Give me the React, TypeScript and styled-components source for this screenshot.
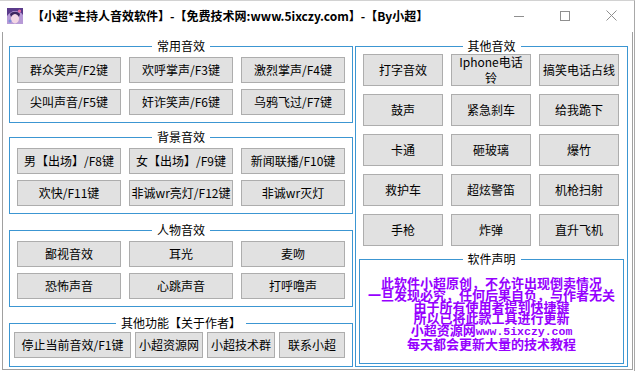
import React from "react";
import styled, { createGlobalStyle } from "styled-components";

const GlobalStyle = createGlobalStyle`
  html, body { margin: 0; padding: 0; background: #fff; }
  body { font-family: "Noto Sans CJK SC", "Microsoft YaHei", sans-serif; }
  * { box-sizing: border-box; }
`;

const Window = styled.div`
  width: 635px;
  height: 371px;
  border-top: 1px solid #d2d2d2;
  border-right: 1px solid #a8a8a8;
  display: flex;
  flex-direction: column;
  background: #fff;
  overflow: hidden;
`;

const TitleBar = styled.div`
  height: 31px;
  flex: none;
  display: flex;
  align-items: center;
  padding-bottom: 2px;
`;

const AppIcon = styled.svg`
  margin-left: 7px;
  flex: none;
`;

const TitleText = styled.div`
  margin-left: 9px;
  font-size: 12px;
  font-weight: 700;
  color: #000;
  white-space: nowrap;
  flex: 1;
`;

const Controls = styled.div`
  display: flex;
  height: 100%;
`;

const ControlButton = styled.div`
  width: 46px;
  display: flex;
  align-items: center;
  justify-content: center;
`;

const Client = styled.div`
  flex: 1;
  margin: 0 1px 1px 2px;
  border: 1px solid #a0a0a0;
  border-top: none;
  display: flex;
  padding: 0 4px 0 6px;
  gap: 2px;
`;

const LeftColumn = styled.div`
  width: 344px;
  display: flex;
  flex-direction: column;
`;

const RightColumn = styled.div`
  width: 273px;
  display: flex;
  flex-direction: column;
`;

const Group = styled.div<{ $mt: number; $pad: string }>`
  position: relative;
  border: 1px solid #3c96d2;
  margin-top: ${(p) => p.$mt}px;
  padding: ${(p) => p.$pad};
`;

const GroupTitle = styled.span`
  position: absolute;
  top: -9px;
  left: 50%;
  transform: translateX(-50%);
  background: #fff;
  padding: 0 5px;
  font-size: 12px;
  line-height: 16px;
  color: #000;
  white-space: nowrap;
`;

const ButtonGrid = styled.div<{ $cols: string; $colGap: number; $rowGap: number; $pad?: string }>`
  display: grid;
  grid-template-columns: ${(p) => p.$cols};
  column-gap: ${(p) => p.$colGap}px;
  row-gap: ${(p) => p.$rowGap}px;
  padding: ${(p) => p.$pad || "0"};
`;

const SoundButton = styled.button<{ $h: number }>`
  height: ${(p) => p.$h}px;
  margin: 0;
  padding: 0 4px;
  background: #e1e1e1;
  border: 1px solid #adadad;
  border-radius: 0;
  font-family: "Noto Sans CJK SC", "Microsoft YaHei", sans-serif;
  font-size: 12px;
  line-height: 16px;
  color: #000;
  display: flex;
  align-items: center;
  justify-content: center;
  text-align: center;
  white-space: nowrap;
`;

const WrapLabel = styled.span`
  white-space: normal;
  display: block;
`;

const Notice = styled.div`
  text-align: center;
  color: #9600ff;
  font-weight: 700;
  font-size: 13px;
  line-height: 11.8px;
  white-space: nowrap;
  font-family: "Noto Sans CJK SC", "SimSun", sans-serif;
`;

const NoticeLine = styled.div``;

const Mono = styled.span`
  font-family: "Liberation Mono", monospace;
  font-size: 11.5px;
`;

const common = ["群众笑声/F2键", "欢呼掌声/F3键", "激烈掌声/F4键", "尖叫声音/F5键", "奸诈笑声/F6键", "乌鸦飞过/F7键"];
const background = ["男【出场】/F8键", "女【出场】/F9键", "新闻联播/F10键", "欢快/F11键", "非诚wr亮灯/F12键", "非诚wr灭灯"];
const people = ["鄙视音效", "耳光", "麦吻", "恐怖声音", "心跳声音", "打呼噜声"];
const other = ["停止当前音效/F1键", "小超资源网", "小超技术群", "联系小超"];
const others2 = ["打字音效", "Iphone电话铃", "搞笑电话占线", "鼓声", "紧急刹车", "给我跪下", "卡通", "砸玻璃", "爆竹", "救护车", "超炫警笛", "机枪扫射", "手枪", "炸弹", "直升飞机"];

export default function App() {
  return (
    <>
      <GlobalStyle />
      <Window>
        <TitleBar>
          <AppIcon width="16" height="16" viewBox="0 0 16 16">
            <rect width="16" height="16" fill="#b79ad6" />
            <path d="M0 0h16v7c-2-3-5-4-8-4S2 5 0 8z" fill="#5a3a8a" />
            <ellipse cx="8" cy="10.5" rx="4" ry="5" fill="#f3d6e4" />
            <path d="M3 6c2-3 8-3 10 0l-1 3c-1-2-3-3-4-3s-3 1-4 3z" fill="#3d2660" />
            <circle cx="12.5" cy="3" r="1.6" fill="#e86aa6" />
            <circle cx="3" cy="13" r="1.5" fill="#7b8fd8" />
          </AppIcon>
          <TitleText>【小超*主持人音效软件】-【免费技术网:www.5ixczy.com】-【By小超】</TitleText>
          <Controls>
            <ControlButton>
              <svg width="10" height="10" viewBox="0 0 10 10">
                <path d="M0 5.5H10" stroke="#8f8f8f" strokeWidth="1" />
              </svg>
            </ControlButton>
            <ControlButton>
              <svg width="10" height="10" viewBox="0 0 10 10">
                <rect x="0.5" y="0.5" width="9" height="9" fill="none" stroke="#8f8f8f" strokeWidth="1" />
              </svg>
            </ControlButton>
            <ControlButton>
              <svg width="11" height="11" viewBox="0 0 11 11">
                <path d="M0.5 0.5L10.5 10.5M10.5 0.5L0.5 10.5" stroke="#8f8f8f" strokeWidth="1" />
              </svg>
            </ControlButton>
          </Controls>
        </TitleBar>
        <Client>
          <LeftColumn>
            <Group $mt={14} $pad="10px 7px 7px 7px">
              <GroupTitle>常用音效</GroupTitle>
              <ButtonGrid $cols="repeat(3, 104px)" $colGap={8} $rowGap={6}>
                {common.map((t) => (
                  <SoundButton key={t} $h={26}>{t}</SoundButton>
                ))}
              </ButtonGrid>
            </Group>
            <Group $mt={14} $pad="10px 7px 7px 7px">
              <GroupTitle>背景音效</GroupTitle>
              <ButtonGrid $cols="repeat(3, 104px)" $colGap={8} $rowGap={6}>
                {background.map((t) => (
                  <SoundButton key={t} $h={26}>{t}</SoundButton>
                ))}
              </ButtonGrid>
            </Group>
            <Group $mt={16} $pad="10px 7px 7px 7px">
              <GroupTitle>人物音效</GroupTitle>
              <ButtonGrid $cols="repeat(3, 104px)" $colGap={8} $rowGap={6}>
                {people.map((t) => (
                  <SoundButton key={t} $h={26}>{t}</SoundButton>
                ))}
              </ButtonGrid>
            </Group>
            <Group $mt={16} $pad="8px 7px 8px 4px">
              <GroupTitle>其他功能【关于作者】</GroupTitle>
              <ButtonGrid $cols="117px 68px 68px 66px" $colGap={4} $rowGap={0}>
                {other.map((t) => (
                  <SoundButton key={t} $h={26}>{t}</SoundButton>
                ))}
              </ButtonGrid>
            </Group>
          </LeftColumn>
          <RightColumn>
            <Group $mt={14} $pad="7px 3px 2px 3px">
              <GroupTitle>其他音效</GroupTitle>
              <ButtonGrid $cols="repeat(3, 80px)" $colGap={8} $rowGap={8} $pad="0 5px 0 4px">
                {others2.map((t) => (
                  <SoundButton key={t} $h={32}>
                    {t === "Iphone电话铃" ? <WrapLabel>Iphone电话<br />铃</WrapLabel> : t}
                  </SoundButton>
                ))}
              </ButtonGrid>
              <Group $mt={13} $pad="17px 0 13px 0">
                <GroupTitle>软件声明</GroupTitle>
                <Notice>
                  <NoticeLine>此软件小超原创，不允许出现倒卖情况</NoticeLine>
                  <NoticeLine>一旦发现必究，任何后果自负，与作者无关</NoticeLine>
                  <NoticeLine>由于所有使用者提到快捷键</NoticeLine>
                  <NoticeLine>所以已将此款工具进行更新</NoticeLine>
                  <NoticeLine>小超资源网<Mono>www.5ixczy.com</Mono></NoticeLine>
                  <NoticeLine>每天都会更新大量的技术教程</NoticeLine>
                </Notice>
              </Group>
            </Group>
          </RightColumn>
        </Client>
      </Window>
    </>
  );
}
